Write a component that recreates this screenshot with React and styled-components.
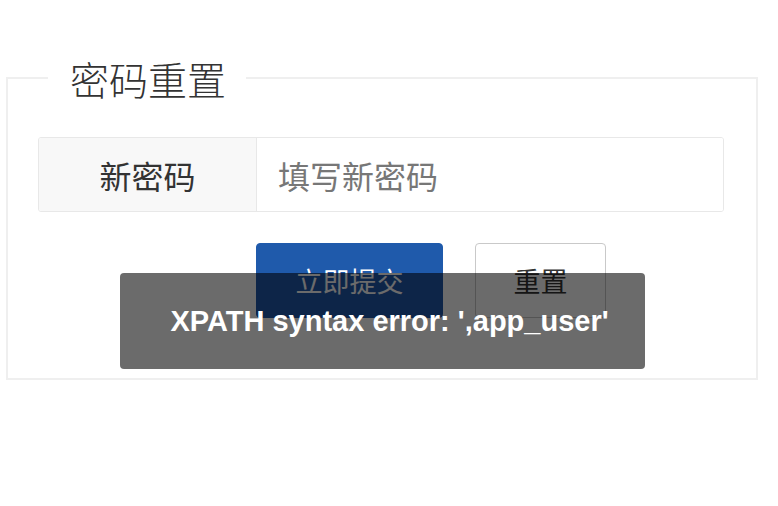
import React from "react";
import styled, { createGlobalStyle } from "styled-components";

const Global = createGlobalStyle`
  html, body { margin: 0; padding: 0; background: #fff; }
  body { font-family: "Noto Sans CJK SC", "Liberation Sans", sans-serif; }
  * { box-sizing: border-box; }
`;

const Page = styled.div`
  width: 778px;
  height: 506px;
  padding: 58px 20px 0 6px;
  position: relative;
  overflow: hidden;
`;

const Fieldset = styled.fieldset`
  margin: 0;
  width: 752px;
  border: 2px solid #efefef;
  padding: 39px 32px 60px 30px;
  min-width: 0;
`;

const Legend = styled.legend`
  margin-left: 10px;
  padding: 0 20px 0 22px;
  font-size: 39px;
  line-height: 40px;
  font-weight: 300;
  color: #333;
`;

const InputRow = styled.div`
  display: flex;
  height: 75px;
  border: 1px solid #e8e8e8;
  border-radius: 3px;
  overflow: hidden;
`;

const Label = styled.label`
  flex: 0 0 218px;
  display: flex;
  align-items: center;
  justify-content: center;
  background: #f8f8f8;
  border-right: 1px solid #e8e8e8;
  font-size: 32px;
  color: #333;
`;

const Input = styled.input`
  flex: 1;
  border: none;
  outline: none;
  padding: 0 0 0 21px;
  font-family: "Noto Sans CJK SC", "Liberation Sans", sans-serif;
  font-size: 32px;
  color: #333;
  background: #fff;
  &::placeholder { color: #777; }
`;

const ButtonRow = styled.div`
  display: flex;
  gap: 32px;
  margin-top: 31px;
  padding-left: 218px;
`;

const Button = styled.button`
  height: 75px;
  width: ${(p) => p.$w}px;
  border-radius: 4px;
  font-family: "Noto Sans CJK SC", "Liberation Sans", sans-serif;
  font-size: 27px;
  cursor: pointer;
  border: 1px solid ${(p) => (p.$primary ? "#1f5aab" : "#c9c9c9")};
  background: ${(p) => (p.$primary ? "#1f5aab" : "#fff")};
  color: ${(p) => (p.$primary ? "#fff" : "#333")};
`;

const Toast = styled.div`
  position: absolute;
  left: 120px;
  top: 273px;
  width: 525px;
  height: 96px;
  padding-left: 14px;
  border-radius: 4px;
  background: rgba(0, 0, 0, 0.58);
  display: flex;
  align-items: center;
  justify-content: center;
  color: #fff;
  font-family: "Liberation Sans", Arial, sans-serif;
  font-weight: bold;
  font-size: 29px;
`;

export default function App() {
  return (
    <>
      <Global />
      <Page>
        <Fieldset>
          <Legend>密码重置</Legend>
          <InputRow>
            <Label>新密码</Label>
            <Input type="password" placeholder="填写新密码" />
          </InputRow>
          <ButtonRow>
            <Button $primary $w={187}>立即提交</Button>
            <Button $w={131}>重置</Button>
          </ButtonRow>
        </Fieldset>
        <Toast>XPATH syntax error: ',app_user'</Toast>
      </Page>
    </>
  );
}
